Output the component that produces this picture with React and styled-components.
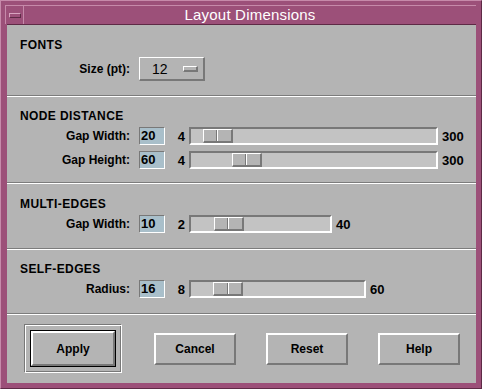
import React from 'react';
import styled, { createGlobalStyle } from 'styled-components';

const GlobalStyle = createGlobalStyle`
	html, body {
		margin: 0;
		padding: 0;
		background: #b4b4b4;
	}
	body {
		font-family: 'Liberation Sans', Arial, sans-serif;
	}
`;

const Window = styled.div`
	box-sizing: border-box;
	width: 482px;
	height: 389px;
	background: #9c5079;
	border-top: 1px solid #c68aaa;
	border-left: 1px solid #c68aaa;
	border-right: 1px solid #5e2a46;
	border-bottom: 1px solid #5e2a46;
	padding: 4px 5px 5px 4px;
	display: flex;
	flex-direction: column;
`;

const TitleBar = styled.div`
	display: flex;
	height: 19px;
	border-top: 1px solid #c68aaa;
	box-sizing: border-box;
`;

const MenuButton = styled.div`
	width: 19px;
	display: flex;
	align-items: center;
	justify-content: center;
	border-right: 1px solid #c68aaa;
	border-left: 1px solid #c68aaa;
	box-sizing: border-box;
`;

const MenuBar = styled.span`
	width: 10px;
	height: 3px;
	background: #9c5079;
	border-top: 1px solid #d8a4c0;
	border-left: 1px solid #d8a4c0;
	border-bottom: 1px solid #5e2a46;
	border-right: 1px solid #5e2a46;
`;

const Title = styled.div`
	flex: 1;
	text-align: center;
	color: #ffffff;
	font-size: 15px;
	line-height: 18px;
	letter-spacing: 0.2px;
`;

const Content = styled.div`
	flex: 1;
	margin-left: 2px;
	background: #b4b4b4;
	display: flex;
	flex-direction: column;
	border-top: 1px solid #5e2a46;
`;

const Section = styled.div`
	padding: ${({ pad }) => pad};
	border-bottom: 1px solid #7c7c7c;
	box-shadow: 0 1px 0 #ffffff;
	margin-bottom: 1px;
	display: flex;
	flex-direction: column;
`;

const Heading = styled.div`
	font-size: 12px;
	font-weight: bold;
	line-height: 14px;
	color: #000;
	letter-spacing: 0.4px;
	margin-bottom: ${({ mb }) => mb || '4px'};
`;

const Rows = styled.div`
	display: flex;
	flex-direction: column;
	gap: 6px;
`;

const Row = styled.div`
	display: flex;
	align-items: center;
	height: ${({ h }) => h || '18px'};
`;

const Label = styled.div`
	width: 110px;
	text-align: right;
	font-size: 12px;
	font-weight: bold;
	margin-right: 9px;
	color: #000;
`;

const OptionMenu = styled.div`
	box-sizing: border-box;
	width: 66px;
	height: 24px;
	border-top: 1px solid #ffffff;
	border-left: 1px solid #ffffff;
	border-right: 2px solid #787878;
	border-bottom: 2px solid #787878;
	display: flex;
	align-items: center;
	justify-content: space-between;
	padding: 0 5px 0 12px;
	font-size: 14px;
	color: #000;
`;

const OptionBar = styled.span`
	box-sizing: border-box;
	width: 15px;
	height: 6px;
	background: #b4b4b4;
	border-top: 1px solid #ffffff;
	border-left: 1px solid #ffffff;
	border-right: 2px solid #787878;
	border-bottom: 2px solid #787878;
`;

const Field = styled.div`
	box-sizing: border-box;
	width: 26px;
	height: 18px;
	background: #a9bfca;
	border-top: 1px solid #787878;
	border-left: 1px solid #787878;
	border-right: 1px solid #ffffff;
	border-bottom: 1px solid #ffffff;
	font-size: 13px;
	font-weight: bold;
	line-height: 16px;
	padding-left: 1px;
	color: #000;
`;

const MinLabel = styled.div`
	width: 20px;
	text-align: right;
	margin-right: 4px;
	font-size: 13px;
	font-weight: bold;
	color: #000;
`;

const MaxLabel = styled.div`
	margin-left: 4px;
	font-size: 13px;
	font-weight: bold;
	color: #000;
`;

const Trough = styled.div`
	position: relative;
	box-sizing: border-box;
	width: ${({ w }) => w}px;
	height: 18px;
	background: #c3c3c3;
	border-top: 2px solid #787878;
	border-left: 2px solid #787878;
	border-right: 2px solid #ffffff;
	border-bottom: 2px solid #ffffff;
`;

const Thumb = styled.div`
	position: absolute;
	top: 0;
	box-sizing: border-box;
	width: 30px;
	height: 14px;
	display: flex;
	background: #b4b4b4;
	border-top: 1px solid #ffffff;
	border-left: 1px solid #ffffff;
	border-right: 2px solid #787878;
	border-bottom: 2px solid #787878;
`;

const ThumbHalf = styled.span`
	flex: 1;
	& + & {
		border-left: 1px solid #ffffff;
	}
	&:first-child {
		border-right: 1px solid #787878;
	}
`;

const ButtonRow = styled.div`
	display: flex;
	align-items: center;
	gap: 30px;
	padding: 9px 0 0 17px;
`;

const DefaultRing = styled.div`
	flex-shrink: 0;
	box-sizing: border-box;
	width: 98px;
	height: 49px;
	border-top: 1px solid #787878;
	border-left: 1px solid #787878;
	border-right: 1px solid #ffffff;
	border-bottom: 1px solid #ffffff;
	box-shadow: inset 1px 1px 0 #ffffff, inset -1px -1px 0 #787878;
	display: flex;
	align-items: center;
	justify-content: center;
	margin-right: 2px;
`;

const Button = styled.button`
	flex-shrink: 0;
	box-sizing: border-box;
	width: ${({ isDefault }) => (isDefault ? '84px' : '82px')};
	height: ${({ isDefault }) => (isDefault ? '35px' : '32px')};
	background: #b4b4b4;
	border: none;
	border-top: 2px solid #ffffff;
	border-left: 2px solid #ffffff;
	border-right: 2px solid #787878;
	border-bottom: 2px solid #787878;
	outline: ${({ isDefault }) => (isDefault ? '1px solid #000' : 'none')};
	outline-offset: 0;
	font-family: 'Liberation Sans', Arial, sans-serif;
	font-size: 12px;
	font-weight: bold;
	color: #000;
	padding: 0;
	cursor: pointer;
`;

const sliders = {
	nodes: [
		{ label: 'Gap Width:', value: 20, min: 4, max: 300, width: 249 },
		{ label: 'Gap Height:', value: 60, min: 4, max: 300, width: 249 }
	],
	multi: [{ label: 'Gap Width:', value: 10, min: 2, max: 40, width: 143 }],
	self: [{ label: 'Radius:', value: 16, min: 8, max: 60, width: 177 }]
};

const SliderRow = ({ label, value, min, max, width }) => {
	// usable track = inner width minus thumb
	const left = ((value - min) / (max - min)) * (width - 4 - 30);
	return (
		<Row>
			<Label>{label}</Label>
			<Field>{value}</Field>
			<MinLabel>{min}</MinLabel>
			<Trough w={width}>
				<Thumb style={{ left: `${left}px` }}>
					<ThumbHalf />
					<ThumbHalf />
				</Thumb>
			</Trough>
			<MaxLabel>{max}</MaxLabel>
		</Row>
	);
};

const App = () => {
	return (
		<>
			<GlobalStyle />
			<Window>
				<TitleBar>
					<MenuButton>
						<MenuBar />
					</MenuButton>
					<Title>Layout Dimensions</Title>
				</TitleBar>
				<Content>
					<Section pad="13px 0 14px 13px">
						<Heading mb="5px">FONTS</Heading>
						<Row h="24px">
							<Label>Size (pt):</Label>
							<OptionMenu>
								12
								<OptionBar />
							</OptionMenu>
						</Row>
					</Section>

					<Section pad="12px 0 13px 13px">
						<Heading>NODE DISTANCE</Heading>
						<Rows>
							{sliders.nodes.map((s) => (
								<SliderRow key={s.label} {...s} />
							))}
						</Rows>
					</Section>

					<Section pad="13px 0 15px 13px">
						<Heading>MULTI-EDGES</Heading>
						<Rows>
							{sliders.multi.map((s) => (
								<SliderRow key={s.label} {...s} />
							))}
						</Rows>
					</Section>

					<Section pad="12px 0 15px 13px">
						<Heading>SELF-EDGES</Heading>
						<Rows>
							{sliders.self.map((s) => (
								<SliderRow key={s.label} {...s} />
							))}
						</Rows>
					</Section>

					<ButtonRow>
						<DefaultRing>
							<Button isDefault>Apply</Button>
						</DefaultRing>
						<Button>Cancel</Button>
						<Button>Reset</Button>
						<Button>Help</Button>
					</ButtonRow>
				</Content>
			</Window>
		</>
	);
};

export default App;
